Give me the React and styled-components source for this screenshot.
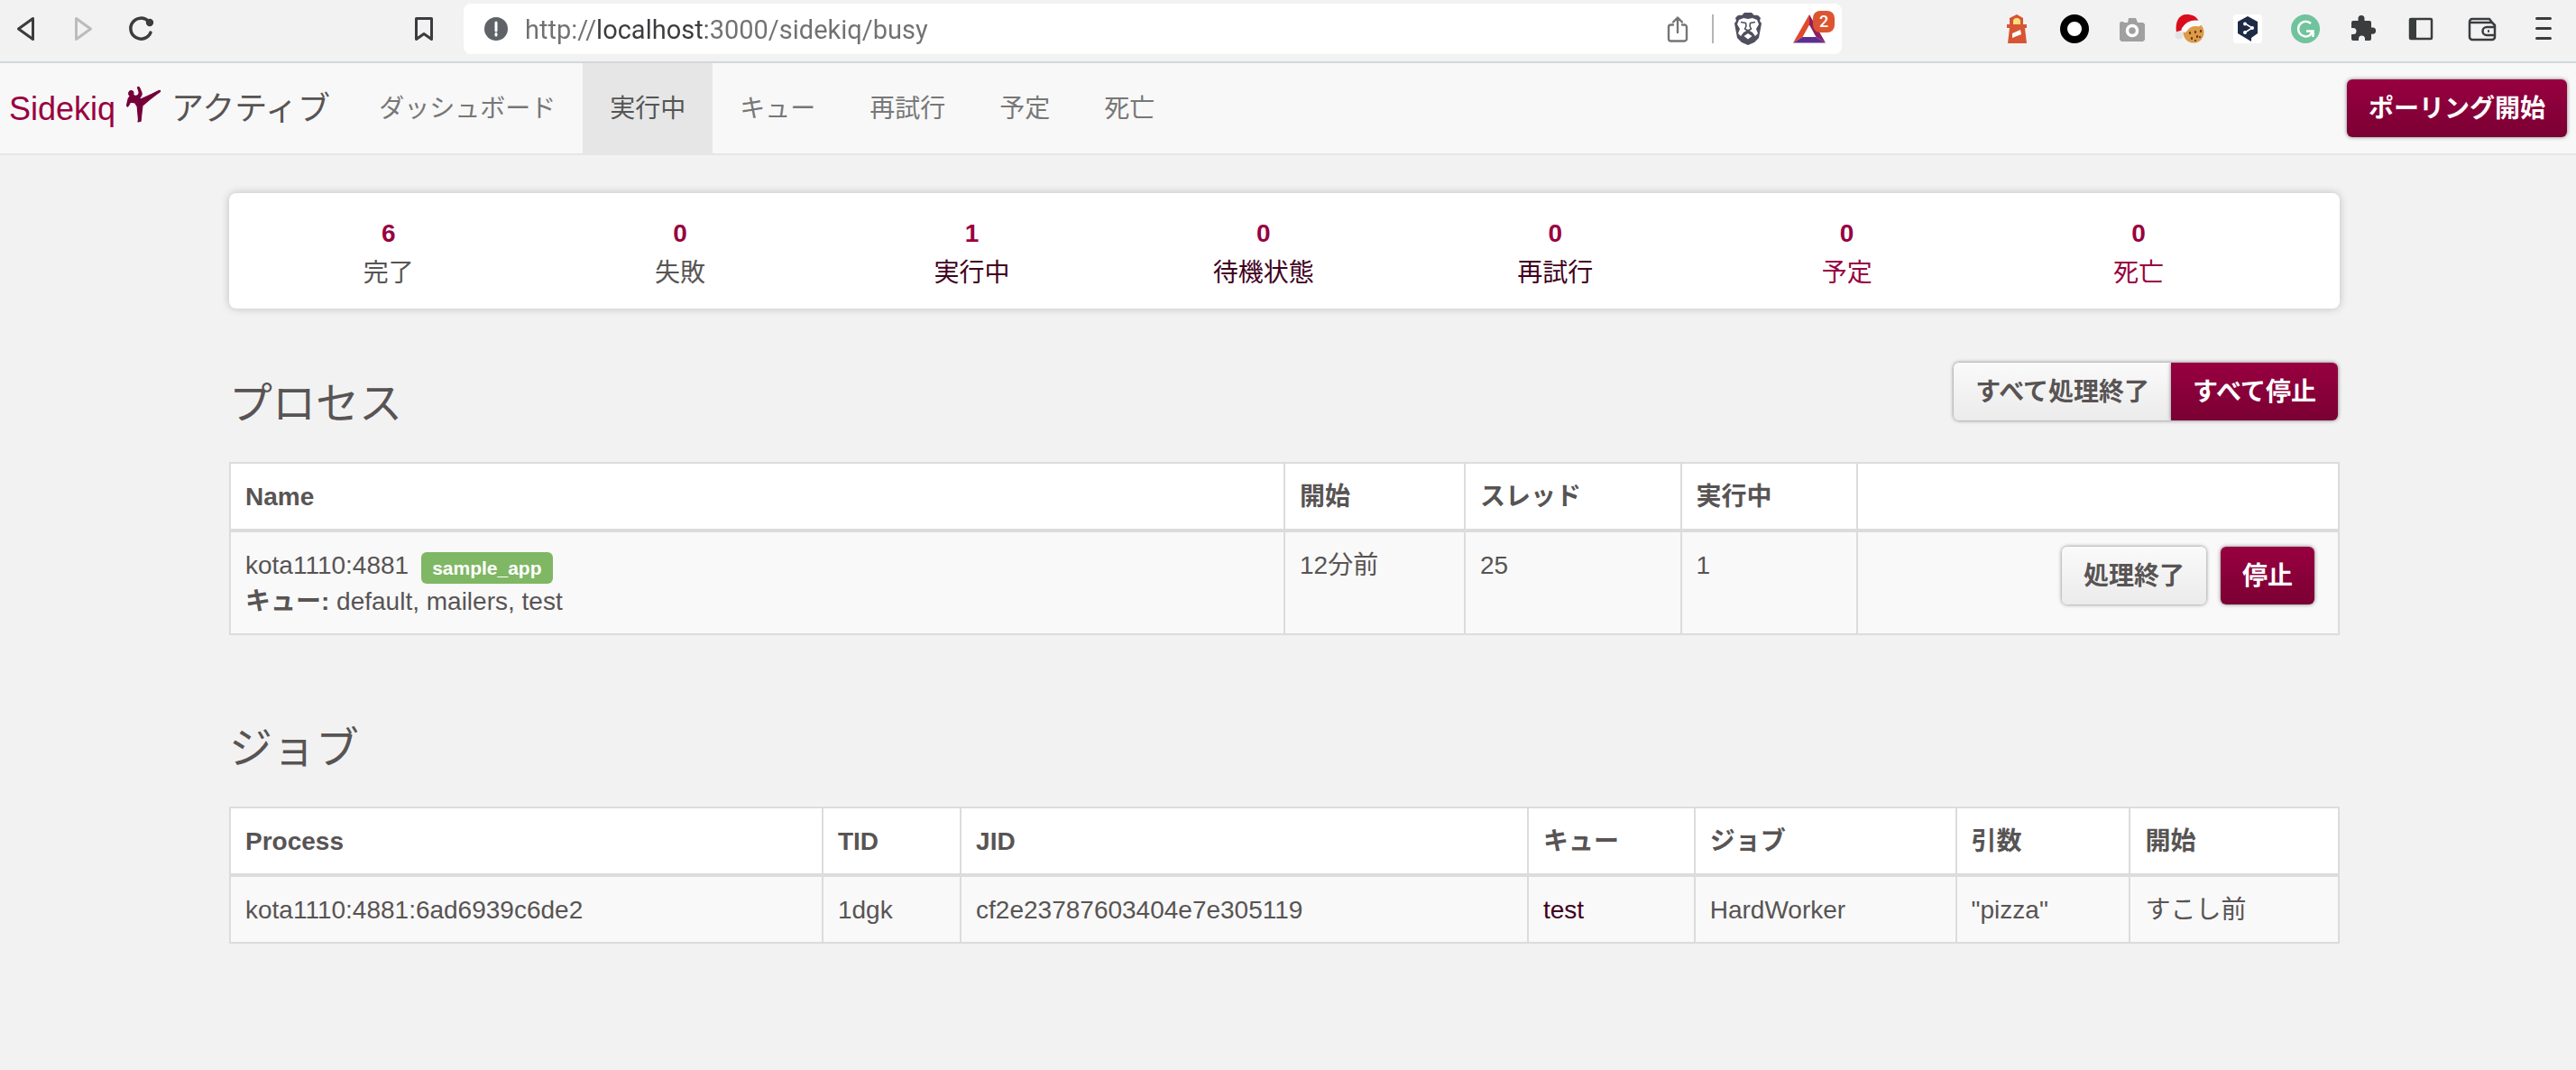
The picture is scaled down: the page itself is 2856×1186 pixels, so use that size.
import React from "react";
import styled, { createGlobalStyle, css } from "styled-components";

const brand = "#980040";
const wine = "#40001c";
const ink = "#585454";
const line = "#dcdcdc";

const GlobalStyle = createGlobalStyle`
  * { box-sizing: border-box; }
  html { background: #f2f2f2; }
  body {
    margin: 0;
    color: ${ink};
    background: #f2f2f2;
    font-family: "Liberation Sans", "Noto Sans CJK JP", sans-serif;
    font-size: 28px;
    line-height: 40px;
  }
  a { text-decoration: none; color: ${wine}; }
  button, input { font: inherit; }
`;

/* ---------- Browser toolbar ---------- */

const Toolbar = styled.header`
  display: grid;
  grid-template-columns: 18% minmax(0, 1fr) 814px;
  align-items: center;
  height: 70px;
  padding-bottom: 4px;
  background: #f2f2f2;
  border-bottom: 2px solid #d3d7db;
`;

const ToolGroup = styled.div`
  display: flex;
  align-items: center;
  gap: ${(p) => p.$gap || 32}px;
`;

const NavTools = styled(ToolGroup)`
  padding: 0 28px 0 12px;
`;

const ExtensionTools = styled(ToolGroup)`
  justify-content: flex-end;
  padding-right: 20px;
`;

const IconButton = styled.button`
  display: flex;
  flex: none;
  align-items: center;
  justify-content: center;
  width: ${(p) => p.$width || 32}px;
  height: 32px;
  padding: 0;
  border: 0;
  background: none;
  color: #3b3c3e;
  &:disabled { color: #bcbcbc; }
  ${(p) => p.$push && css`margin-left: auto;`}
  svg { display: block; overflow: visible; }
`;

const AddressBar = styled.div`
  display: flex;
  align-items: center;
  height: 56px;
  padding: 0 6px 0 20px;
  gap: 22px;
  border-radius: 8px;
  background: #fff;
`;

const SiteField = styled.div`
  display: flex;
  flex: 1;
  align-items: center;
  gap: 16px;
  min-width: 0;
`;

const AddressInput = styled.input`
  flex: 1;
  min-width: 0;
  height: 40px;
  padding: 2px 0 0;
  border: 0;
  outline: 0;
  font-family: Roboto, sans-serif;
  font-size: 29px;
  color: #707173;
  -webkit-text-fill-color: transparent;
  background: linear-gradient(90deg, #707173 81px, #3b3c3e 81px, #3b3c3e 201px, #707173 201px);
  -webkit-background-clip: text;
  background-clip: text;
`;

const Divider = styled.span`
  width: 2px;
  height: 32px;
  background: #b3b6b8;
`;

const RewardsButton = styled(IconButton)`
  position: relative;
  justify-content: flex-start;
  margin-left: 12px;
`;

const Badge = styled.span`
  position: absolute;
  top: -4px;
  right: 2px;
  width: 24px;
  height: 24px;
  border-radius: 8px;
  background: #dc5530;
  color: #fff;
  font: 500 18px/24px Roboto, sans-serif;
  text-align: center;
`;

/* ---------- App navigation ---------- */

const Navbar = styled.nav`
  display: flex;
  align-items: stretch;
  height: 102px;
  padding: 0 10px;
  background: #f8f8f8;
  box-shadow: inset 0 -2px #e5e5e5;
`;

const Brand = styled.a`
  display: flex;
  align-items: center;
  margin-right: 24px;
  font-size: 36px;
  color: ${brand};
`;

const Kicker = styled.svg`
  width: 60px;
  height: 60px;
  margin: -12px 1px 0;
`;

const BrandStatus = styled.span`
  color: ${ink};
`;

const NavLink = styled.a`
  padding: 31px 30px;
  color: ${(p) => (p.$active ? "#555" : "#777")};
  background: ${(p) => (p.$active ? "#e6e6e6" : "transparent")};
`;

const Button = styled.button`
  height: 64px;
  padding: 13px 24px 11px;
  border: 0;
  border-radius: 6px;
  font-weight: 700;
  line-height: 40px;
  white-space: nowrap;
  color: ${(p) => (p.$primary ? "#fff" : ink)};
  background: ${(p) =>
    p.$primary
      ? "linear-gradient(#980040, #7a0033)"
      : "linear-gradient(#fafafa, #ebebeb)"};
  box-shadow: 0 0 4px rgba(0, 0, 0, 0.5);
`;

const NavAction = styled.div`
  margin: 18px 0 0 auto;
`;

/* ---------- Page ---------- */

const Page = styled.main`
  width: 82%;
  max-width: 2340px;
  margin: 42px auto 0;
  position: relative;
  left: -4px;
  padding-bottom: 80px;
`;

const Summary = styled.ul`
  display: flex;
  margin: 0 0 58px;
  padding: 25px 15px 19px;
  list-style: none;
  background: #fff;
  border-radius: 8px;
  box-shadow: 0 0 10px rgba(0, 0, 0, 0.22);
`;

const Stat = styled.li`
  display: flex;
  flex-direction: column;
  width: 14%;
  gap: 4px;
  text-align: center;
`;

const Count = styled.span`
  font-weight: 700;
  color: ${brand};
`;

const StatLabel = styled.span`
  color: ${(p) => p.$color};
`;

const SectionHead = styled.div`
  display: flex;
  align-items: flex-start;
  justify-content: space-between;
  height: 112px;
`;

const Title = styled.h3`
  margin: 18px 0 0;
  font-size: 48px;
  font-weight: 400;
  line-height: 60px;
`;

const ButtonGroup = styled.div`
  display: flex;
  margin: 2px 2px 0 0;
  ${Button}:first-child { border-radius: 6px 0 0 6px; }
  ${Button}:last-child { border-radius: 0 6px 6px 0; }
`;

const Table = styled.table`
  width: 100%;
  table-layout: fixed;
  border-collapse: collapse;
  border: 2px solid ${line};
  background: #fff;
`;

const Th = styled.th`
  width: ${(p) => p.$width || "auto"};
  padding: 17px 16px 15px;
  border: 2px solid ${line};
  border-bottom-width: 4px;
  text-align: left;
  font-weight: 700;
`;

const Td = styled.td`
  padding: 17px 16px 15px;
  border: 2px solid ${line};
  background: #f9f9f9;
  vertical-align: top;
`;

const Label = styled.span`
  display: inline-block;
  height: 35px;
  padding: 0 12px;
  border-radius: 6px;
  background: #7fb765;
  color: #fff;
  font-size: 21px;
  font-weight: 700;
  line-height: 35px;
`;

const ProcessName = styled.div`
  display: flex;
  align-items: center;
  gap: 14px;
  height: 40px;
  ${Label} { margin-top: 4px; }
`;

const RowActions = styled.div`
  display: flex;
  justify-content: flex-end;
  gap: 16px;
  margin-top: -1px;
  padding-right: 10px;
`;

const JobsHead = styled(SectionHead)`
  margin-top: 76px;
  height: 114px;
  padding-top: 2px;
`;

/* ---------- Icons ---------- */

const BackIcon = () => (
  <svg width="32" height="32" fill="none" stroke="currentColor" strokeWidth="3" strokeLinejoin="round">
    <path d="M24.500 4.500v23L8.500 16z" />
  </svg>
);
const ForwardIcon = () => (
  <svg width="32" height="32" fill="none" stroke="currentColor" strokeWidth="3" strokeLinejoin="round">
    <path d="M8.500 4.500v23L24.500 16z" />
  </svg>
);
const ReloadIcon = () => (
  <svg width="32" height="32" fill="none" stroke="currentColor" strokeWidth="3.500" strokeLinecap="round">
    <path d="M24.500 7.500A11.500 11.500 0 1 0 27 20" />
    <circle cx="26" cy="9" r="4.200" fill="currentColor" stroke="none" />
  </svg>
);
const BookmarkIcon = () => (
  <svg width="32" height="32" fill="none" stroke="currentColor" strokeWidth="3" strokeLinejoin="round">
    <path d="M7.500 4.500h17v23L16 21.500l-8.500 6z" />
  </svg>
);
const InfoIcon = () => (
  <svg width="26" height="26">
    <circle cx="13" cy="13" r="13" fill="#5f6368" />
    <path d="M13 6v9M13 18.500v1.500" stroke="#fff" strokeWidth="3" strokeLinecap="round" />
  </svg>
);
const ShareIcon = () => (
  <svg width="32" height="32" fill="none" stroke="#757575" strokeWidth="2.400" strokeLinecap="round" strokeLinejoin="round">
    <path d="M11 11.500H8.500a2.500 2.500 0 0 0-2.500 2.500v13a2.500 2.500 0 0 0 2.500 2.500h15a2.500 2.500 0 0 0 2.500-2.500V14a2.500 2.500 0 0 0-2.500-2.500H21M16 20V4M11 8.500L16 3.500l5 5" />
  </svg>
);
const LionIcon = () => (
  <svg width="32" height="36" viewBox="0 0 32 36">
    <path
      fill="#4f4f60"
      d="M9 3L12 0h8l3 3c3-1 5 0 7 3l-1 3 2 3-3 16-5 5-7 3-7-3-5-5L1 12l2-3-1-3c2-3 4-4 7-3z"
    />
    <path
      fill="#fff"
      d="M6 8l5-2 5 1 5-1 5 2 2 5-3 5 2 5-3 3-3-4-5-3-5 3-3 4-3-3 2-5-3-5z"
    />
    <path
      fill="none"
      stroke="#4f4f60"
      strokeWidth="1.600"
      strokeLinejoin="round"
      d="M8 10.500l5.500 1L14 15l-1.500 3 3.500 2 3.500-2-1.500-3 .5-3.500 5.500-1M16 20v3"
    />
    <path fill="#fff" d="M11.500 26l4.500-3 4.500 3-4.500 3.500z" />
  </svg>
);
const BatIcon = () => (
  <svg width="36" height="32" viewBox="0 0 36 32">
    <path fill="#e2492b" d="M18 0v11.500L10.500 25 0 31.500z" />
    <path fill="#8e205f" d="M18 0l18 31.500-10.500-6.500L18 11.500z" />
    <path fill="#5c2e91" d="M0 31.500L10.500 25h15L36 31.500z" />
  </svg>
);
const LighthouseIcon = () => (
  <svg width="32" height="32">
    <path fill="#d75534" d="M16 0l7 4v7h4v4h-2l2 17H6L8 15H5v-4h3V4z" />
    <path fill="#fbe07a" d="M12 11V8a4 4 0 0 1 8 0v3z" />
    <path fill="#fff" d="M11 21l9-4 1 5-10 4z" />
  </svg>
);
const RingIcon = () => (
  <svg width="32" height="32">
    <circle cx="16" cy="16" r="12" fill="#fff" stroke="#000" strokeWidth="8" />
  </svg>
);
const CameraIcon = () => (
  <svg width="32" height="32">
    <path fill="#a0a0a0" d="M2 10l1-2h3l1 1h4l1-5h8l2 5h6l2 2v17l-2 2H4l-2-2z" />
    <circle cx="16" cy="18" r="5.500" fill="#a0a0a0" stroke="#fff" strokeWidth="3.500" />
  </svg>
);
const CookieIcon = () => (
  <svg width="32" height="32">
    <circle cx="20" cy="20" r="11.500" fill="#dc9b48" />
    <path
      fill="none"
      stroke="#6b3716"
      strokeWidth="2.200"
      strokeLinecap="round"
      d="M16 20v1M22 19v1M28 18v1M18 26v1M24 24v1M27 25v0M22 29v0"
    />
    <path fill="#d90d1c" d="M1 20C-1 8 4 0 12 0c7 0 11 2 14 8L10 16z" />
    <path fill="none" stroke="#fafafa" strokeWidth="6.500" strokeLinecap="round" d="M10 16.500C13 12 18 9 25 10" />
    <circle cx="4" cy="23" r="4.500" fill="#e3e3e3" />
  </svg>
);
const TranslateIcon = () => (
  <svg width="32" height="32">
    <rect width="32" height="32" rx="4" fill="#fff" />
    <path fill="#1d2b46" d="M16 2l11 6v13l-7 5v4l-5-3-10-6V8z" />
    <path fill="none" stroke="#fff" strokeWidth="1.500" d="M13 10l8 5-8 5" />
    <g fill="#fff">
      <circle cx="13" cy="10.500" r="2" />
      <circle cx="21" cy="15" r="2" />
      <circle cx="13" cy="20" r="2" />
    </g>
  </svg>
);
const GrammarIcon = () => (
  <svg width="32" height="32" fill="none" stroke="#fff" strokeWidth="2.500">
    <circle cx="16" cy="16" r="16" fill="#70c39c" stroke="none" />
    <path d="M22 10a8.300 8.300 0 1 0-1 13l3-4M17 18.500h7.500V25" />
  </svg>
);
const PuzzleIcon = () => (
  <svg width="32" height="32">
    <path
      fill="#3b3c3e"
      d="M3 9a2 2 0 0 1 2-2h5.500V4.500a3.500 3.500 0 0 1 7 0V7H23a2 2 0 0 1 2 2v5.500h1.500a3.600 3.600 0 0 1 0 7.200H25V27a2 2 0 0 1-2 2h-5v-2a3.500 3.500 0 0 0-7 0v2H5a2 2 0 0 1-2-2v-5h2a3.500 3.500 0 0 0 0-7H3z"
    />
  </svg>
);
const SidebarIcon = () => (
  <svg width="32" height="32">
    <rect x="4" y="5" width="24" height="22" rx="1" fill="none" stroke="#3b3c3e" strokeWidth="2.500" />
    <path fill="#3b3c3e" d="M4 5h7v22H4z" />
  </svg>
);
const WalletIcon = () => (
  <svg width="32" height="32" fill="none" stroke="#3b3c3e" strokeWidth="2.500" strokeLinejoin="round">
    <path d="M2 8a3 3 0 0 1 3-3h19l3 4 3 3v13a3 3 0 0 1-3 3H5a3 3 0 0 1-3-3zM2 9h25M30 14h-9a4 4 0 0 0 0 9h9M22 18.500h2" />
  </svg>
);
const MenuIcon = () => (
  <svg width="32" height="32">
    <path d="M8.500 4.500h15M8.500 15.500h15M8.500 26.500h15" stroke="#3b3c3e" strokeWidth="3" strokeLinecap="round" />
  </svg>
);

const KickerLogo = () => (
  <Kicker viewBox="0 0 60 60" aria-hidden="true">
    <path
      fill="#730038"
      stroke="#730038"
      strokeWidth="1.200"
      strokeLinejoin="round"
      d="M23.500 12c1-1 2-.5 2.500 1l2 5c.5 2-.5 4-2.500 6l2 .8L40 19l7-3.500c2-.8 2 .5 1 1.500l-3 2-9 7-7 6-.5 4-1.500 13.500-3 .5.500-2.500L23.200 33l-2.500-4-5.200-.8-1.500 3-1.500 2-1-1 .8-4 1-4 2-2.500-1.500-2c-.6-3 1.400-4.500 3.200-4 2 .5 2.500 2.500 1.500 4.500l3 1.300c3-.8 4-3 3.500-5z"
    />
  </Kicker>
);

/* ---------- Data ---------- */

const tabs = ["ダッシュボード", "実行中", "キュー", "再試行", "予定", "死亡"];

const stats = [
  { count: 6, label: "完了", color: ink },
  { count: 0, label: "失敗", color: ink },
  { count: 1, label: "実行中", color: wine, link: true },
  { count: 0, label: "待機状態", color: wine, link: true },
  { count: 0, label: "再試行", color: wine, link: true },
  { count: 0, label: "予定", color: brand, link: true },
  { count: 0, label: "死亡", color: brand, link: true },
];

const extensions = [
  ["Lighthouse", LighthouseIcon],
  ["Ring", RingIcon],
  ["Camera", CameraIcon],
  ["Cookie", CookieIcon],
  ["Translate", TranslateIcon],
  ["Grammar", GrammarIcon],
  ["Extensions", PuzzleIcon],
  ["Sidebar", SidebarIcon],
];

const jobColumns = [
  ["Process", "28.1%"],
  ["TID", "6.55%"],
  ["JID", "26.9%"],
  ["キュー", "7.9%"],
  ["ジョブ", "12.4%"],
  ["引数", "8.25%"],
  ["開始", "auto"],
];

export default function App() {
  return (
    <>
      <GlobalStyle />
      <Toolbar>
        <NavTools>
          <IconButton aria-label="Back"><BackIcon /></IconButton>
          <IconButton aria-label="Forward" disabled><ForwardIcon /></IconButton>
          <IconButton aria-label="Reload"><ReloadIcon /></IconButton>
          <IconButton aria-label="Bookmark" $push><BookmarkIcon /></IconButton>
        </NavTools>
        <AddressBar>
          <SiteField>
            <IconButton aria-label="Site information"><InfoIcon /></IconButton>
            <AddressInput aria-label="Address" defaultValue="http://localhost:3000/sidekiq/busy" spellCheck={false} />
          </SiteField>
          <IconButton aria-label="Share"><ShareIcon /></IconButton>
          <Divider />
          <IconButton aria-label="Shields"><LionIcon /></IconButton>
          <RewardsButton aria-label="Rewards" $width={48}>
            <BatIcon />
            <Badge>2</Badge>
          </RewardsButton>
        </AddressBar>
        <ExtensionTools $gap={36}>
          <ToolGroup>
            {extensions.map(([name, Icon]) => (
              <IconButton key={name} aria-label={name}><Icon /></IconButton>
            ))}
          </ToolGroup>
          <IconButton aria-label="Wallet"><WalletIcon /></IconButton>
          <IconButton aria-label="Menu"><MenuIcon /></IconButton>
        </ExtensionTools>
      </Toolbar>

      <Navbar>
        <Brand href="#">
          Sidekiq
          <KickerLogo />
          <BrandStatus>アクティブ</BrandStatus>
        </Brand>
        {tabs.map((tab) => (
          <NavLink key={tab} href="#" $active={tab === "実行中"}>{tab}</NavLink>
        ))}
        <NavAction>
          <Button $primary>ポーリング開始</Button>
        </NavAction>
      </Navbar>

      <Page>
        <Summary>
          {stats.map(({ count, label, color, link }) => (
            <Stat key={label}>
              <Count>{count}</Count>
              <StatLabel as={link ? "a" : "span"} href={link ? "#" : undefined} $color={color}>
                {label}
              </StatLabel>
            </Stat>
          ))}
        </Summary>

        <SectionHead>
          <Title>プロセス</Title>
          <ButtonGroup>
            <Button>すべて処理終了</Button>
            <Button $primary>すべて停止</Button>
          </ButtonGroup>
        </SectionHead>
        <Table>
          <thead>
            <tr>
              <Th $width="50%">Name</Th>
              <Th $width="8.55%">開始</Th>
              <Th $width="10.25%">スレッド</Th>
              <Th $width="8.35%">実行中</Th>
              <Th aria-label="Actions" />
            </tr>
          </thead>
          <tbody>
            <tr>
              <Td>
                <ProcessName>
                  kota1110:4881
                  <Label>sample_app</Label>
                </ProcessName>
                <b>キュー:</b> default, mailers, test
              </Td>
              <Td>12分前</Td>
              <Td>25</Td>
              <Td>1</Td>
              <Td>
                <RowActions>
                  <Button>処理終了</Button>
                  <Button $primary>停止</Button>
                </RowActions>
              </Td>
            </tr>
          </tbody>
        </Table>

        <JobsHead>
          <Title>ジョブ</Title>
        </JobsHead>
        <Table>
          <thead>
            <tr>
              {jobColumns.map(([name, width]) => (
                <Th key={name} $width={width}>{name}</Th>
              ))}
            </tr>
          </thead>
          <tbody>
            <tr>
              <Td>kota1110:4881:6ad6939c6de2</Td>
              <Td>1dgk</Td>
              <Td>cf2e23787603404e7e305119</Td>
              <Td><a href="#">test</a></Td>
              <Td>HardWorker</Td>
              <Td>"pizza"</Td>
              <Td>すこし前</Td>
            </tr>
          </tbody>
        </Table>
      </Page>
    </>
  );
}
